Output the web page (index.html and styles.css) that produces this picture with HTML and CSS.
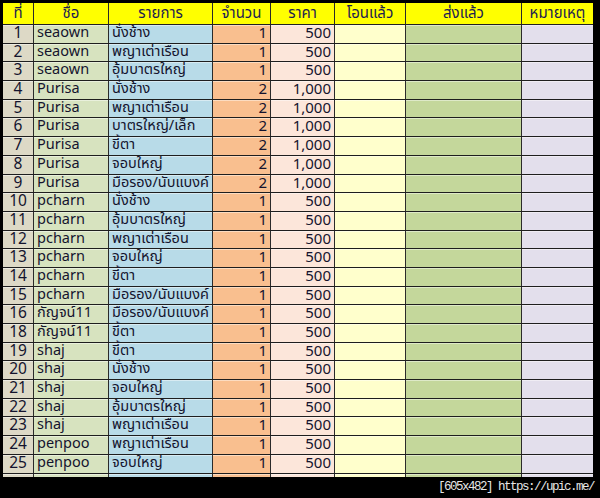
FILE: index.html
```html
<!DOCTYPE html>
<html lang="th">
<head>
<meta charset="utf-8">
<title>รายการ</title>
<link rel="stylesheet" href="styles.css">
</head>
<body>
<div class="frame">
  <div class="sheet">
    <div class="row head">
      <div class="c">ที่</div><div class="c">ชื่อ</div><div class="c">รายการ</div><div class="c">จำนวน</div><div class="c">ราคา</div><div class="c">โอนแล้ว</div><div class="c">ส่งแล้ว</div><div class="c">หมายเหตุ</div>
    </div>
    <div class="row"><div class="c no">1</div><div class="c nm">seaown</div><div class="c it">นั่งช้าง</div><div class="c qt">1</div><div class="c pr">500</div><div class="c tr"></div><div class="c sh"></div><div class="c rm"></div></div>
    <div class="row"><div class="c no">2</div><div class="c nm">seaown</div><div class="c it">พญาเต่าเรือน</div><div class="c qt">1</div><div class="c pr">500</div><div class="c tr"></div><div class="c sh"></div><div class="c rm"></div></div>
    <div class="row"><div class="c no">3</div><div class="c nm">seaown</div><div class="c it">อุ้มบาตรใหญ่</div><div class="c qt">1</div><div class="c pr">500</div><div class="c tr"></div><div class="c sh"></div><div class="c rm"></div></div>
    <div class="row"><div class="c no">4</div><div class="c nm">Purisa</div><div class="c it">นั่งช้าง</div><div class="c qt">2</div><div class="c pr">1,000</div><div class="c tr"></div><div class="c sh"></div><div class="c rm"></div></div>
    <div class="row"><div class="c no">5</div><div class="c nm">Purisa</div><div class="c it">พญาเต่าเรือน</div><div class="c qt">2</div><div class="c pr">1,000</div><div class="c tr"></div><div class="c sh"></div><div class="c rm"></div></div>
    <div class="row"><div class="c no">6</div><div class="c nm">Purisa</div><div class="c it">บาตรใหญ่/เล็ก</div><div class="c qt">2</div><div class="c pr">1,000</div><div class="c tr"></div><div class="c sh"></div><div class="c rm"></div></div>
    <div class="row"><div class="c no">7</div><div class="c nm">Purisa</div><div class="c it">ขี้ตา</div><div class="c qt">2</div><div class="c pr">1,000</div><div class="c tr"></div><div class="c sh"></div><div class="c rm"></div></div>
    <div class="row"><div class="c no">8</div><div class="c nm">Purisa</div><div class="c it">จอบใหญ่</div><div class="c qt">2</div><div class="c pr">1,000</div><div class="c tr"></div><div class="c sh"></div><div class="c rm"></div></div>
    <div class="row"><div class="c no">9</div><div class="c nm">Purisa</div><div class="c it">มือรอง/นับแบงค์</div><div class="c qt">2</div><div class="c pr">1,000</div><div class="c tr"></div><div class="c sh"></div><div class="c rm"></div></div>
    <div class="row"><div class="c no">10</div><div class="c nm">pcharn</div><div class="c it">นั่งช้าง</div><div class="c qt">1</div><div class="c pr">500</div><div class="c tr"></div><div class="c sh"></div><div class="c rm"></div></div>
    <div class="row"><div class="c no">11</div><div class="c nm">pcharn</div><div class="c it">อุ้มบาตรใหญ่</div><div class="c qt">1</div><div class="c pr">500</div><div class="c tr"></div><div class="c sh"></div><div class="c rm"></div></div>
    <div class="row"><div class="c no">12</div><div class="c nm">pcharn</div><div class="c it">พญาเต่าเรือน</div><div class="c qt">1</div><div class="c pr">500</div><div class="c tr"></div><div class="c sh"></div><div class="c rm"></div></div>
    <div class="row"><div class="c no">13</div><div class="c nm">pcharn</div><div class="c it">จอบใหญ่</div><div class="c qt">1</div><div class="c pr">500</div><div class="c tr"></div><div class="c sh"></div><div class="c rm"></div></div>
    <div class="row"><div class="c no">14</div><div class="c nm">pcharn</div><div class="c it">ขี้ตา</div><div class="c qt">1</div><div class="c pr">500</div><div class="c tr"></div><div class="c sh"></div><div class="c rm"></div></div>
    <div class="row"><div class="c no">15</div><div class="c nm">pcharn</div><div class="c it">มือรอง/นับแบงค์</div><div class="c qt">1</div><div class="c pr">500</div><div class="c tr"></div><div class="c sh"></div><div class="c rm"></div></div>
    <div class="row"><div class="c no">16</div><div class="c nm">กัญจน์11</div><div class="c it">มือรอง/นับแบงค์</div><div class="c qt">1</div><div class="c pr">500</div><div class="c tr"></div><div class="c sh"></div><div class="c rm"></div></div>
    <div class="row"><div class="c no">18</div><div class="c nm">กัญจน์11</div><div class="c it">ขี้ตา</div><div class="c qt">1</div><div class="c pr">500</div><div class="c tr"></div><div class="c sh"></div><div class="c rm"></div></div>
    <div class="row"><div class="c no">19</div><div class="c nm">shaj</div><div class="c it">ขี้ตา</div><div class="c qt">1</div><div class="c pr">500</div><div class="c tr"></div><div class="c sh"></div><div class="c rm"></div></div>
    <div class="row"><div class="c no">20</div><div class="c nm">shaj</div><div class="c it">นั่งช้าง</div><div class="c qt">1</div><div class="c pr">500</div><div class="c tr"></div><div class="c sh"></div><div class="c rm"></div></div>
    <div class="row"><div class="c no">21</div><div class="c nm">shaj</div><div class="c it">จอบใหญ่</div><div class="c qt">1</div><div class="c pr">500</div><div class="c tr"></div><div class="c sh"></div><div class="c rm"></div></div>
    <div class="row"><div class="c no">22</div><div class="c nm">shaj</div><div class="c it">อุ้มบาตรใหญ่</div><div class="c qt">1</div><div class="c pr">500</div><div class="c tr"></div><div class="c sh"></div><div class="c rm"></div></div>
    <div class="row"><div class="c no">23</div><div class="c nm">shaj</div><div class="c it">พญาเต่าเรือน</div><div class="c qt">1</div><div class="c pr">500</div><div class="c tr"></div><div class="c sh"></div><div class="c rm"></div></div>
    <div class="row"><div class="c no">24</div><div class="c nm">penpoo</div><div class="c it">พญาเต่าเรือน</div><div class="c qt">1</div><div class="c pr">500</div><div class="c tr"></div><div class="c sh"></div><div class="c rm"></div></div>
    <div class="row"><div class="c no">25</div><div class="c nm">penpoo</div><div class="c it">จอบใหญ่</div><div class="c qt">1</div><div class="c pr">500</div><div class="c tr"></div><div class="c sh"></div><div class="c rm"></div></div>
    <div class="row"><div class="c no"></div><div class="c nm"></div><div class="c it"></div><div class="c qt"></div><div class="c pr"></div><div class="c tr"></div><div class="c sh"></div><div class="c rm"></div></div>
  </div>
</div>
<div class="bar">[605x482] https://upic.me/</div>
</body>
</html>
```
FILE: styles.css
```css
html, body {
  margin: 0;
  padding: 0;
  background: #000;
}
body {
  width: 600px;
  height: 498px;
  overflow: hidden;
}
.frame {
  height: 474px;
  padding: 3px 7px 0 3px;
  overflow: hidden;
}
.sheet {
  display: flex;
  flex-direction: column;
  font-family: Tahoma, "Noto Sans Thai", "Liberation Sans", "DejaVu Sans", sans-serif;
  font-size: 14.5px;
  color: #14142e;
}
.row {
  display: grid;
  grid-template-columns: 31px 75px 104px 58px 64px 71px 116px 71px;
  height: 18.7px;
  flex: none;
  box-sizing: border-box;
  border-bottom: 1px solid #1e1e1e;
}
.row.head {
  height: 22px;
  background: #ffff00;
  color: #1c1c52;
  border-bottom: 1px solid #222;
}
.c {
  border-right: 1px solid #2a2a2a;
  line-height: 17.7px;
  padding-top: 0;
  white-space: nowrap;
  box-shadow: inset 0 1px 0 rgba(255,255,255,0.45);
}
.head .c {
  text-align: center;
  line-height: 21px;
  font-size: 15px;
  box-shadow: none;
}
.c:last-child { border-right: none; }
.no { background: #ddd9c6; text-align: center; font-size: 15.5px; }
.nm { background: #d7e3bf; padding-left: 3px; }
.it { background: #b8dbe8; padding-left: 3px; }
.qt { background: #f9bf8f; text-align: right; padding-right: 3px; font-size: 15px; }
.pr { background: #fce6da; text-align: right; padding-right: 3px; font-size: 15px; }
.tr { background: #ffffcc; }
.sh { background: #c4d79b; }
.rm { background: #e3dfec; }
.bar {
  height: 21px;
  line-height: 21px;
  text-align: right;
  padding-right: 6px;
  color: #e6e6e6;
  font-family: "Liberation Mono", monospace;
  font-size: 12.5px;
  letter-spacing: -1.5px;
}
```
